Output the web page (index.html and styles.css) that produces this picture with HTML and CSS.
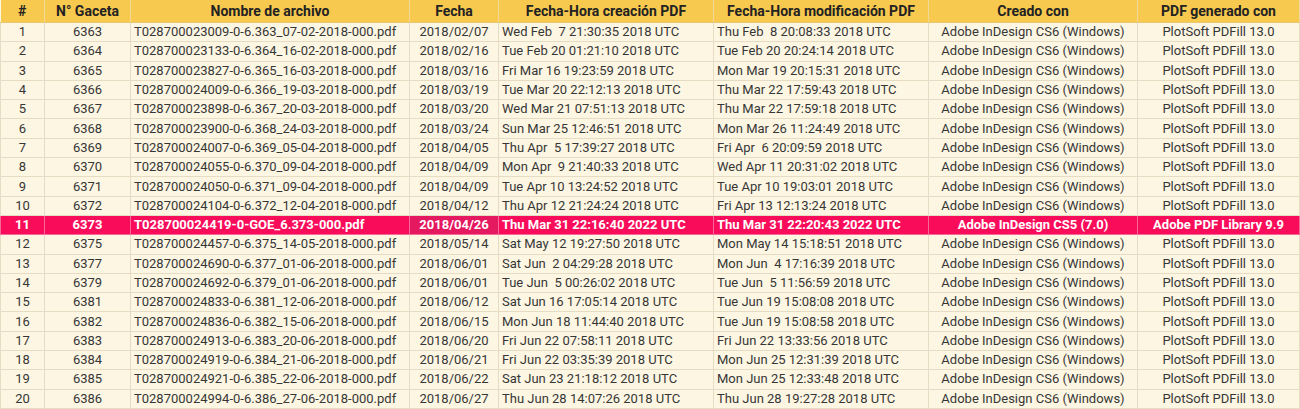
FILE: index.html
```html
<!DOCTYPE html>
<html lang="es">
<head>
<meta charset="utf-8">
<title>Gacetas PDF</title>
<link rel="stylesheet" href="styles.css">
</head>
<body>
<table class="tbl">
<colgroup>
<col class="c1"><col class="c2"><col class="c3"><col class="c4"><col class="c5"><col class="c6"><col class="c7"><col class="c8">
</colgroup>
<thead>
<tr><th>#</th><th>N° Gaceta</th><th>Nombre de archivo</th><th>Fecha</th><th>Fecha-Hora creación PDF</th><th>Fecha-Hora modificación PDF</th><th>Creado con</th><th>PDF generado con</th></tr>
</thead>
<tbody>
<tr><td class="ctr">1</td><td class="ctr">6363</td><td>T028700023009-0-6.363_07-02-2018-000.pdf</td><td class="ctr">2018/02/07</td><td>Wed Feb&nbsp;&nbsp;7 21:30:35 2018 UTC</td><td>Thu Feb&nbsp;&nbsp;8 20:08:33 2018 UTC</td><td class="ctr">Adobe InDesign CS6 (Windows)</td><td class="ctr">PlotSoft PDFill 13.0</td></tr>
<tr><td class="ctr">2</td><td class="ctr">6364</td><td>T028700023133-0-6.364_16-02-2018-000.pdf</td><td class="ctr">2018/02/16</td><td>Tue Feb 20 01:21:10 2018 UTC</td><td>Tue Feb 20 20:24:14 2018 UTC</td><td class="ctr">Adobe InDesign CS6 (Windows)</td><td class="ctr">PlotSoft PDFill 13.0</td></tr>
<tr><td class="ctr">3</td><td class="ctr">6365</td><td>T028700023827-0-6.365_16-03-2018-000.pdf</td><td class="ctr">2018/03/16</td><td>Fri Mar 16 19:23:59 2018 UTC</td><td>Mon Mar 19 20:15:31 2018 UTC</td><td class="ctr">Adobe InDesign CS6 (Windows)</td><td class="ctr">PlotSoft PDFill 13.0</td></tr>
<tr><td class="ctr">4</td><td class="ctr">6366</td><td>T028700024009-0-6.366_19-03-2018-000.pdf</td><td class="ctr">2018/03/19</td><td>Tue Mar 20 22:12:13 2018 UTC</td><td>Thu Mar 22 17:59:43 2018 UTC</td><td class="ctr">Adobe InDesign CS6 (Windows)</td><td class="ctr">PlotSoft PDFill 13.0</td></tr>
<tr><td class="ctr">5</td><td class="ctr">6367</td><td>T028700023898-0-6.367_20-03-2018-000.pdf</td><td class="ctr">2018/03/20</td><td>Wed Mar 21 07:51:13 2018 UTC</td><td>Thu Mar 22 17:59:18 2018 UTC</td><td class="ctr">Adobe InDesign CS6 (Windows)</td><td class="ctr">PlotSoft PDFill 13.0</td></tr>
<tr><td class="ctr">6</td><td class="ctr">6368</td><td>T028700023900-0-6.368_24-03-2018-000.pdf</td><td class="ctr">2018/03/24</td><td>Sun Mar 25 12:46:51 2018 UTC</td><td>Mon Mar 26 11:24:49 2018 UTC</td><td class="ctr">Adobe InDesign CS6 (Windows)</td><td class="ctr">PlotSoft PDFill 13.0</td></tr>
<tr><td class="ctr">7</td><td class="ctr">6369</td><td>T028700024007-0-6.369_05-04-2018-000.pdf</td><td class="ctr">2018/04/05</td><td>Thu Apr&nbsp;&nbsp;5 17:39:27 2018 UTC</td><td>Fri Apr&nbsp;&nbsp;6 20:09:59 2018 UTC</td><td class="ctr">Adobe InDesign CS6 (Windows)</td><td class="ctr">PlotSoft PDFill 13.0</td></tr>
<tr><td class="ctr">8</td><td class="ctr">6370</td><td>T028700024055-0-6.370_09-04-2018-000.pdf</td><td class="ctr">2018/04/09</td><td>Mon Apr&nbsp;&nbsp;9 21:40:33 2018 UTC</td><td>Wed Apr 11 20:31:02 2018 UTC</td><td class="ctr">Adobe InDesign CS6 (Windows)</td><td class="ctr">PlotSoft PDFill 13.0</td></tr>
<tr><td class="ctr">9</td><td class="ctr">6371</td><td>T028700024050-0-6.371_09-04-2018-000.pdf</td><td class="ctr">2018/04/09</td><td>Tue Apr 10 13:24:52 2018 UTC</td><td>Tue Apr 10 19:03:01 2018 UTC</td><td class="ctr">Adobe InDesign CS6 (Windows)</td><td class="ctr">PlotSoft PDFill 13.0</td></tr>
<tr><td class="ctr">10</td><td class="ctr">6372</td><td>T028700024104-0-6.372_12-04-2018-000.pdf</td><td class="ctr">2018/04/12</td><td>Thu Apr 12 21:24:24 2018 UTC</td><td>Fri Apr 13 12:13:24 2018 UTC</td><td class="ctr">Adobe InDesign CS6 (Windows)</td><td class="ctr">PlotSoft PDFill 13.0</td></tr>
<tr class="hl"><td class="ctr">11</td><td class="ctr">6373</td><td>T028700024419-0-GOE_6.373-000.pdf</td><td class="ctr hl-date">2018/04/26</td><td>Thu Mar 31 22:16:40 2022 UTC</td><td>Thu Mar 31 22:20:43 2022 UTC</td><td class="ctr">Adobe InDesign CS5 (7.0)</td><td class="ctr">Adobe PDF Library 9.9</td></tr>
<tr><td class="ctr">12</td><td class="ctr">6375</td><td>T028700024457-0-6.375_14-05-2018-000.pdf</td><td class="ctr">2018/05/14</td><td>Sat May 12 19:27:50 2018 UTC</td><td>Mon May 14 15:18:51 2018 UTC</td><td class="ctr">Adobe InDesign CS6 (Windows)</td><td class="ctr">PlotSoft PDFill 13.0</td></tr>
<tr><td class="ctr">13</td><td class="ctr">6377</td><td>T028700024690-0-6.377_01-06-2018-000.pdf</td><td class="ctr">2018/06/01</td><td>Sat Jun&nbsp;&nbsp;2 04:29:28 2018 UTC</td><td>Mon Jun&nbsp;&nbsp;4 17:16:39 2018 UTC</td><td class="ctr">Adobe InDesign CS6 (Windows)</td><td class="ctr">PlotSoft PDFill 13.0</td></tr>
<tr><td class="ctr">14</td><td class="ctr">6379</td><td>T028700024692-0-6.379_01-06-2018-000.pdf</td><td class="ctr">2018/06/01</td><td>Tue Jun&nbsp;&nbsp;5 00:26:02 2018 UTC</td><td>Tue Jun&nbsp;&nbsp;5 11:56:59 2018 UTC</td><td class="ctr">Adobe InDesign CS6 (Windows)</td><td class="ctr">PlotSoft PDFill 13.0</td></tr>
<tr><td class="ctr">15</td><td class="ctr">6381</td><td>T028700024833-0-6.381_12-06-2018-000.pdf</td><td class="ctr">2018/06/12</td><td>Sat Jun 16 17:05:14 2018 UTC</td><td>Tue Jun 19 15:08:08 2018 UTC</td><td class="ctr">Adobe InDesign CS6 (Windows)</td><td class="ctr">PlotSoft PDFill 13.0</td></tr>
<tr><td class="ctr">16</td><td class="ctr">6382</td><td>T028700024836-0-6.382_15-06-2018-000.pdf</td><td class="ctr">2018/06/15</td><td>Mon Jun 18 11:44:40 2018 UTC</td><td>Tue Jun 19 15:08:58 2018 UTC</td><td class="ctr">Adobe InDesign CS6 (Windows)</td><td class="ctr">PlotSoft PDFill 13.0</td></tr>
<tr><td class="ctr">17</td><td class="ctr">6383</td><td>T028700024913-0-6.383_20-06-2018-000.pdf</td><td class="ctr">2018/06/20</td><td>Fri Jun 22 07:58:11 2018 UTC</td><td>Fri Jun 22 13:33:56 2018 UTC</td><td class="ctr">Adobe InDesign CS6 (Windows)</td><td class="ctr">PlotSoft PDFill 13.0</td></tr>
<tr><td class="ctr">18</td><td class="ctr">6384</td><td>T028700024919-0-6.384_21-06-2018-000.pdf</td><td class="ctr">2018/06/21</td><td>Fri Jun 22 03:35:39 2018 UTC</td><td>Mon Jun 25 12:31:39 2018 UTC</td><td class="ctr">Adobe InDesign CS6 (Windows)</td><td class="ctr">PlotSoft PDFill 13.0</td></tr>
<tr><td class="ctr">19</td><td class="ctr">6385</td><td>T028700024921-0-6.385_22-06-2018-000.pdf</td><td class="ctr">2018/06/22</td><td>Sat Jun 23 21:18:12 2018 UTC</td><td>Mon Jun 25 12:33:48 2018 UTC</td><td class="ctr">Adobe InDesign CS6 (Windows)</td><td class="ctr">PlotSoft PDFill 13.0</td></tr>
<tr><td class="ctr">20</td><td class="ctr">6386</td><td>T028700024994-0-6.386_27-06-2018-000.pdf</td><td class="ctr">2018/06/27</td><td>Thu Jun 28 14:07:26 2018 UTC</td><td>Thu Jun 28 19:27:28 2018 UTC</td><td class="ctr">Adobe InDesign CS6 (Windows)</td><td class="ctr">PlotSoft PDFill 13.0</td></tr>
</tbody>
</table>
</body>
</html>
```
FILE: styles.css
```css
html, body {
  margin: 0;
  padding: 0;
  background: #ffffff;
}
body {
  font-family: Roboto, "Liberation Sans", sans-serif;
  font-size: 13px;
  color: #363636;
}
.tbl {
  width: 1299px;
  border-collapse: collapse;
  table-layout: fixed;
  background: #fdf6e3;
}
.c1 { width: 44px; }
.c2 { width: 86px; }
.c3 { width: 279px; }
.c4 { width: 89px; }
.c5 { width: 215px; }
.c6 { width: 215px; }
.c7 { width: 209px; }
.c8 { width: 162px; }
.tbl th {
  background: #f7c94f;
  color: #222222;
  font-weight: 700;
  font-size: 14px;
  height: 22px;
  padding: 0 3px;
  text-align: center;
  white-space: nowrap;
  border-right: 1px solid #f0d89a;
  border-bottom: 1px solid #e8c873;
}
.tbl td {
  height: 18.3px;
  line-height: 18px;
  padding: 0 3px;
  white-space: nowrap;
  overflow: hidden;
  border: 1px solid #e6dcc4;
}
.tbl td.ctr { text-align: center; }
.tbl tr.hl td {
  background: #f90d5b;
  color: #ffffff;
  font-weight: 700;
  border-color: #f6689a;
}
.tbl tr.hl td.hl-date {
  background: #e4195f;
}
```
